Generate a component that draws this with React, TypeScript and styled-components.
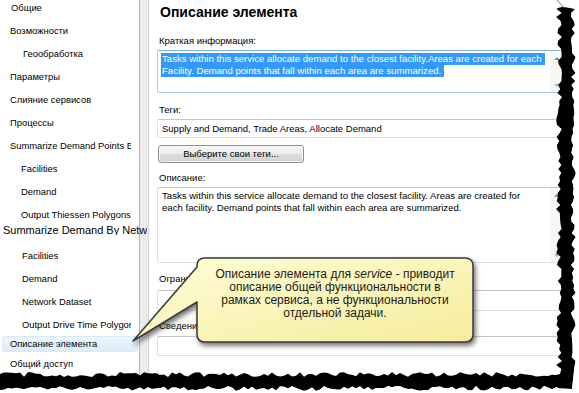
import React from 'react';
import styled, { createGlobalStyle } from 'styled-components';

const Global = createGlobalStyle`
  html, body { margin: 0; padding: 0; background: #fff; }
  body { font-family: "Liberation Sans", Arial, sans-serif; }
`;

const Frame = styled.div`
  position: relative;
  width: 579px;
  height: 393px;
  overflow: hidden;
  background: #fff;
  display: flex;
  font-family: "Liberation Sans", Arial, sans-serif;
  color: #000;
`;

const Sidebar = styled.div`
  width: 139px;
  flex: none;
  display: flex;
  flex-direction: column;
  margin-top: -4.5px;
  font-size: 9.4px;
`;

const NavItem = styled.div<{ $h?: number; $mt?: number; $active?: boolean; $splice?: boolean }>`
  box-sizing: border-box;
  height: ${p => p.$h ?? 23}px;
  line-height: ${p => (p.$h ?? 23) - (p.$active ? 2 : 0)}px;
  margin-top: ${p => p.$mt ?? 0}px;
  white-space: nowrap;
  ${p => p.$splice ? `
    position: relative;
    z-index: 1;
    width: 147px;
    font-size: 11px;
  ` : ''}
  ${p => p.$active ? `
    margin-left: 2px;
    margin-right: 1px;
    border: 1px solid #d6eaf8;
    border-radius: 3px;
    background: linear-gradient(#eef6fd, #dcedfa);
  ` : ''}
`;

const NavText = styled.span<{ $indent: number; $max: number }>`
  display: block;
  margin-left: ${p => p.$indent}px;
  max-width: ${p => p.$max - p.$indent}px;
  overflow: hidden;
`;

const Splitter = styled.div`
  width: 8px;
  flex: none;
  background: #ececec;
  border-left: 1px solid #b4b4b4;
  border-right: 1px solid #d4d4d4;
`;

const Panel = styled.div`
  flex: 1;
  min-width: 0;
  display: flex;
  flex-direction: column;
  padding-left: 8px;
  font-size: 9.5px;
`;

const Title = styled.div`
  font-weight: bold;
  font-size: 14px;
  line-height: 24px;
  padding-left: 3px;
  white-space: nowrap;
`;

const Label = styled.div<{ $mt: number }>`
  margin-top: ${p => p.$mt}px;
  line-height: 14px;
  padding-left: 2px;
  white-space: nowrap;
`;

const Box = styled.div<{ $mt: number; $h: number; $focus?: boolean }>`
  box-sizing: border-box;
  margin-top: ${p => p.$mt}px;
  height: ${p => p.$h}px;
  width: 407px;
  flex: none;
  border: 1px solid ${p => (p.$focus ? '#a9cbe8' : '#dcdfe4')};
  border-top-color: ${p => (p.$focus ? '#7fb0dc' : '#c3c7cc')};
  border-radius: 2px;
  display: flex;
  background: #fff;
`;

const BoxText = styled.div`
  flex: 1;
  min-width: 0;
  padding: 2px 0 0 4px;
  font-size: 9.6px;
  line-height: 12px;
  white-space: nowrap;
  overflow: hidden;
`;

const InputText = styled.div`
  flex: 1;
  padding-left: 4px;
  font-size: 9.5px;
  line-height: 17px;
  white-space: nowrap;
`;

const SelLine = styled.span`
  display: inline-block;
  background: #3399ff;
  color: #fff;
  padding-right: 3px;
  margin-left: -1px;
  padding-left: 1px;
`;

const Line = styled.div``;

const Scroll = styled.div`
  width: 13px;
  flex: none;
  display: flex;
  flex-direction: column;
  justify-content: space-between;
  align-items: center;
  padding: 6px 0 5px;
  background: #f7f7f7;
`;

const Arrow = styled.div<{ $dir: 'up' | 'down' }>`
  width: 0;
  height: 0;
  border-left: 3px solid transparent;
  border-right: 3px solid transparent;
  ${p => (p.$dir === 'up' ? 'border-bottom: 3px solid #8c8c8c;' : 'border-top: 3px solid #b0b0b0;')}
`;

const Button = styled.div`
  box-sizing: border-box;
  margin-top: 7px;
  margin-left: 1px;
  width: 146px;
  height: 18px;
  border: 1px solid #8e8f8f;
  border-radius: 3px;
  background: linear-gradient(#f6f6f6 0%, #ececec 48%, #dcdcdc 52%, #d4d4d4 100%);
  box-shadow: inset 0 0 0 1px rgba(255,255,255,0.7);
  text-align: center;
  line-height: 16px;
  font-size: 9.5px;
`;

const Callout = styled.div`
  position: absolute;
  left: 130px;
  top: 255px;
  width: 350px;
  height: 95px;
  z-index: 2;
`;

const CalloutShape = styled.svg`
  position: absolute;
  inset: 0;
  overflow: visible;
  filter: drop-shadow(2px 3px 2.5px rgba(0, 0, 0, 0.55));
`;

const CalloutText = styled.div`
  position: absolute;
  left: 67px;
  top: 3px;
  width: 276px;
  padding-top: 10px;
  text-align: center;
  font-size: 12px;
  line-height: 13px;
  color: #1a1a1a;
  white-space: nowrap;
`;

const Torn = styled.svg`
  position: absolute;
  inset: 0;
  z-index: 3;
  pointer-events: none;
`;

function rng(seed: number) {
  let s = seed;
  return () => {
    s = (s * 16807) % 2147483647;
    return (s - 1) / 2147483646;
  };
}

function buildTorn() {
  const r = rng(12345);
  const rightC: [number, number][] = [];
  const rightS: [number, number][] = [];
  for (let y = 9; y <= 372; y += 4) {
    rightC.push([556 + r() * 6, y]);
    rightS.push([571 + r() * 5, y]);
  }
  const bottomC: [number, number][] = [];
  const bottomS: [number, number][] = [];
  for (let x = 560; x >= -4; x -= 4) {
    bottomC.push([x, 372 + r() * 5]);
    bottomS.push([x, 386 + r() * 5]);
  }
  const pts = (a: [number, number][]) => a.map(p => `${p[0].toFixed(1)},${p[1].toFixed(1)}`).join(' ');
  const black =
    pts(rightC) + ' ' + pts(bottomC) + ' ' + pts([...bottomS].reverse()) + ' 572,389 ' + pts([...rightS].reverse()) + ' 566,6 558,8';
  const white =
    '557,-1 564,7 ' + pts(rightS) + ' 572,389 ' + pts(bottomS) + ' -2,395 582,395 582,-1';
  return { black, white };
}

const torn = buildTorn();

type Item = { t: string; i: number; h?: number; mt?: number; active?: boolean; splice?: boolean };

const items: Item[] = [
  { t: 'Общие', i: 11 },
  { t: 'Возможности', i: 10 },
  { t: 'Геообработка', i: 23 },
  { t: 'Параметры', i: 10 },
  { t: 'Слияние сервисов', i: 10 },
  { t: 'Процессы', i: 10 },
  { t: 'Summarize Demand Points By', i: 10 },
  { t: 'Facilities', i: 21 },
  { t: 'Demand', i: 21 },
  { t: 'Output Thiessen Polygons', i: 21 },
  { t: 'Summarize Demand By Network', i: 3, h: 9, splice: true },
  { t: 'Facilities', i: 22, mt: 9 },
  { t: 'Demand', i: 22 },
  { t: 'Network Dataset', i: 22 },
  { t: 'Output Drive Time Polygons', i: 22 },
  { t: 'Описание элемента', i: 7, h: 16, active: true },
  { t: 'Общий доступ', i: 10 },
];

export default function App() {
  return (
    <>
      <Global />
      <Frame>
        <Sidebar>
          {items.map((it, k) => (
            <NavItem key={k} $h={it.h} $mt={it.mt} $active={it.active} $splice={it.splice}>
              <NavText $indent={it.i} $max={it.splice ? 147 : 131}>{it.t}</NavText>
            </NavItem>
          ))}
        </Sidebar>
        <Splitter />
        <Panel>
          <Title>Описание элемента</Title>
          <Label $mt={10}>Краткая информация:</Label>
          <Box $mt={2} $h={43} $focus>
            <BoxText>
              <Line><SelLine>Tasks within this service allocate demand to the closest facility.Areas are created for each </SelLine></Line>
              <Line><SelLine>Facility. Demand points that fall within each area are summarized.</SelLine></Line>
            </BoxText>
            <Scroll>
              <Arrow $dir="up" />
              <Arrow $dir="down" />
            </Scroll>
          </Box>
          <Label $mt={10}>Теги:</Label>
          <Box $mt={2} $h={19}>
            <InputText>Supply and Demand, Trade Areas, Allocate Demand</InputText>
          </Box>
          <Button>Выберите свои теги...</Button>
          <Label $mt={8}>Описание:</Label>
          <Box $mt={2} $h={76}>
            <BoxText>
              <Line>Tasks within this service allocate demand to the closest facility. Areas are created for</Line>
              <Line>each facility. Demand points that fall within each area are summarized.</Line>
            </BoxText>
            <Scroll>
              <Arrow $dir="up" />
              <Arrow $dir="down" />
            </Scroll>
          </Box>
          <Label $mt={9}>Ограничения доступа и использования:</Label>
          <Box $mt={4} $h={21} />
          <Label $mt={8}>Сведения об авторах:</Label>
          <Box $mt={3} $h={20} />
        </Panel>

        <Callout>
          <CalloutShape width="350" height="95" viewBox="0 0 350 95">
            <defs>
              <linearGradient id="cg" x1="0" y1="0" x2="1" y2="1">
                <stop offset="0" stopColor="#fffed8" />
                <stop offset="1" stopColor="#f5ec9c" />
              </linearGradient>
            </defs>
            <path
              d="M75 3 H335 Q343 3 343 11 V79 Q343 87 335 87 H75 Q67 87 67 79 V47 L3 86 L67 12 V11 Q67 3 75 3 Z"
              fill="url(#cg)"
              stroke="#3a3a3a"
              strokeWidth="1.5"
              strokeLinejoin="round"
            />
          </CalloutShape>
          <CalloutText>
            Описание элемента для <i>service</i> - приводит
            <br />
            описание общей функциональности в
            <br />
            рамках сервиса, а не функциональности
            <br />
            отдельной задачи.
          </CalloutText>
        </Callout>

        <Torn width="579" height="393" viewBox="0 0 579 393">
          <polygon points={torn.black} fill="#000" />
          <polygon points={torn.white} fill="#fff" />
          <line x1="557" y1="0" x2="564" y2="8" stroke="#777" strokeWidth="1" />
        </Torn>
      </Frame>
    </>
  );
}
